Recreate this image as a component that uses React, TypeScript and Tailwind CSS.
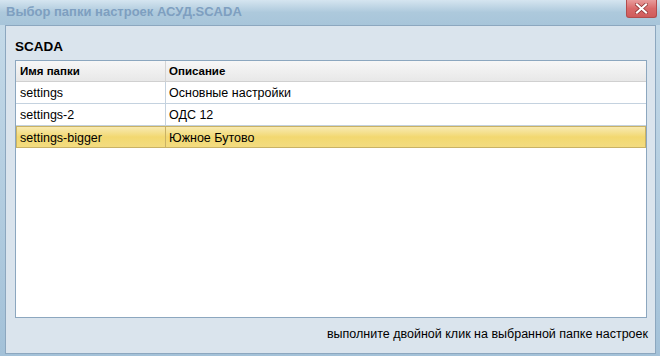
const ROWS = [
  { name: 'settings', desc: 'Основные настройки' },
  { name: 'settings-2', desc: 'ОДС 12' },
  { name: 'settings-bigger', desc: 'Южное Бутово' },
];

export default function App() {
  const selected = 2;
  return (
    <div
      className="w-[660px] h-[356px] flex flex-col bg-gradient-to-b from-[#c6dbe9] to-[#a3c1d8] text-[12px] text-black"
      style={{ fontFamily: '"Liberation Sans", Arial, sans-serif' }}
    >
      {/* title bar */}
      <div className="h-[25px] flex items-start shrink-0 bg-gradient-to-b from-[#d5e5f0] via-[#adc9dc] to-[#a7c5da]">
        <div className="pl-[6px] pt-[4px] font-bold text-[13px] text-[#7e9fc0] leading-[15px] flex-1">
          Выбор папки настроек АСУД.SCADA
        </div>
        <div className="mr-[3px] w-[31px] h-[18px] rounded-b-[3px] border border-[#b24c4c] border-t-0 bg-gradient-to-b from-[#e89c9c] via-[#d96a6a] to-[#cf5b5b] flex items-center justify-center">
          <svg width="13" height="11" viewBox="0 0 13 11">
            <path d="M2 1.5 L11 9.5 M11 1.5 L2 9.5" stroke="#8a3030" strokeWidth="3.6" strokeLinecap="square" />
            <path d="M2 1.5 L11 9.5 M11 1.5 L2 9.5" stroke="#ffffff" strokeWidth="2.2" strokeLinecap="square" />
          </svg>
        </div>
      </div>

      {/* body */}
      <div className="flex-1 ml-[5px] mr-[4px] mb-[2px] border border-[#8ca7bf] bg-[#dae4ed] flex flex-col pl-[9px] pr-[8px]">
        <div className="h-[34px] pt-[13px] font-bold text-[13.5px] leading-[16px]">SCADA</div>
        <div className="h-[258px] border border-[#8ca7bf] bg-white flex flex-col">
          <div className="h-[21px] flex bg-gradient-to-b from-[#f7f7f7] to-[#e8e8e8] border-b border-[#d0d0d0] font-bold text-[11.5px]">
            <div className="w-[150px] border-r border-[#d4d4d4] pl-[4px] leading-[20px]">Имя папки</div>
            <div className="flex-1 pl-[3px] leading-[20px]">Описание</div>
          </div>
          {ROWS.map((r, i) =>
            i === selected ? (
              <div
                key={r.name}
                className="h-[22px] flex border border-[#c9b265] bg-gradient-to-b from-[#f8eab0] via-[#f2d870] to-[#f3dc80] text-[12.5px]"
              >
                <div className="w-[149px] border-r border-[#c9b265] pl-[3px] pt-[2px] leading-[18px]">{r.name}</div>
                <div className="flex-1 pl-[3px] pt-[2px] leading-[18px]">{r.desc}</div>
              </div>
            ) : (
              <div key={r.name} className="h-[22px] flex border-b border-[#c4d2df] text-[12.5px]">
                <div className="w-[150px] border-r border-[#c4d2df] pl-[4px] pt-[2px] leading-[19px]">{r.name}</div>
                <div className="flex-1 pl-[3px] pt-[2px] leading-[19px]">{r.desc}</div>
              </div>
            )
          )}
        </div>
        <div className="flex-1 flex items-center justify-end pb-[3px] text-[12.5px] mr-[-1px]">
          выполните двойной клик на выбранной папке настроек
        </div>
      </div>
    </div>
  );
}
